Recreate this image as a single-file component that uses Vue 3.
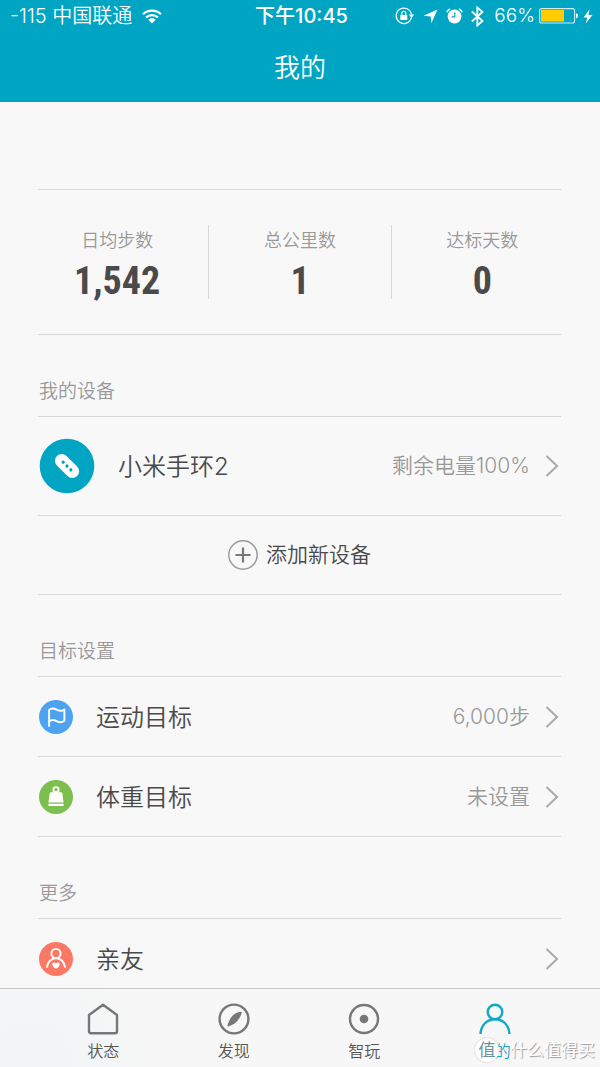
<script setup>
import { ref } from 'vue'

const stats = [
  { label: '日均步数', value: '1,542' },
  { label: '总公里数', value: '1' },
  { label: '达标天数', value: '0' },
]

const goals = [
  { icon: 'flag', name: '运动目标', value: '6,000步' },
  { icon: 'weight', name: '体重目标', value: '未设置' },
]

const tabs = [
  { id: 'status', label: '状态' },
  { id: 'discover', label: '发现' },
  { id: 'play', label: '智玩' },
  { id: 'mine', label: '我的' },
]
const active = ref('mine')
</script>

<template>
  <div class="app">
    <header class="header">
      <div class="status">
        <div class="carrier">
          <span>-115 中国联通</span>
          <svg class="wifi" width="20" height="15" viewBox="0 0 20 15" aria-hidden="true">
            <path d="M1 5.2a13 13 0 0 1 18 0M4 8.5a8.7 8.7 0 0 1 12 0" fill="none" stroke="#fff" stroke-width="2.2" />
            <path d="M6.3 10.8a5.4 5.4 0 0 1 7.4 0L10 14.6z" fill="#fff" />
          </svg>
        </div>
        <div class="time">下午10:45</div>
        <div class="indicators">
          <svg width="20" height="18" viewBox="0 0 20 18" aria-hidden="true">
            <path d="M16.4 10.7A7.7 7.7 0 1 1 16.5 7.5" fill="none" stroke="#fff" stroke-width="1.2" />
            <path d="M13.8 7.5h5.4l-2.7 3.6z" fill="#fff" />
            <rect x="5.3" y="8" width="7" height="5" rx=".6" fill="#fff" />
            <path d="M6.8 8V6.3a2 2 0 0 1 4 0V8" fill="none" stroke="#fff" stroke-width="1.2" />
          </svg>
          <svg width="15" height="15" viewBox="0 0 15 15" aria-hidden="true">
            <path d="M14.5.5 8.4 14.3 7.7 7.4.5 6.8z" fill="#fff" />
          </svg>
          <svg width="17" height="16" viewBox="0 0 17 16" aria-hidden="true">
            <circle cx="8.5" cy="8.5" r="6.9" fill="#fff" />
            <path d="M.9 4.3A5 5 0 0 1 4.1 1M16.1 4.3A5 5 0 0 0 12.9 1" fill="none" stroke="#fff" stroke-width="1.5" />
            <path d="M8.8 4.2v4.6H5.6" fill="none" stroke="#00a5c4" stroke-width="1.2" />
          </svg>
          <svg width="13" height="21" viewBox="0 0 13 21" aria-hidden="true">
            <path d="M.8 5.5 11.5 15l-5.2 4.5v-18L11.5 6 .8 15.5" fill="none" stroke="#fff" stroke-width="1.8" />
          </svg>
          <span class="percent">66%</span>
          <svg class="battery" width="40" height="16" viewBox="0 0 40 16" aria-hidden="true">
            <rect x=".6" y=".6" width="35" height="14.4" rx="2" fill="none" stroke="#fff" stroke-opacity=".8" stroke-width="1.1" />
            <rect x="2" y="2" width="23" height="11.6" fill="#fc0" />
            <path d="M37 5.2q2 .4 2 2.6t-2 2.6z" fill="#fff" />
          </svg>
          <svg class="bolt" width="10" height="15" viewBox="0 0 10 15" aria-hidden="true">
            <path d="M6.6.5.5 8.4h3.7L2.8 14.5 9.5 6H5.4z" fill="#fff" />
          </svg>
        </div>
      </div>
      <h1 class="title">我的</h1>
    </header>

    <main class="content">
      <dl class="stats">
        <div v-for="s in stats" :key="s.label" class="stat">
          <dt>{{ s.label }}</dt>
          <dd>{{ s.value }}</dd>
        </div>
      </dl>

      <section>
        <h2 class="heading">我的设备</h2>
        <div class="list">
          <button type="button" class="row device">
            <svg width="56" height="56" viewBox="0 0 56 56" aria-hidden="true">
              <circle cx="28" cy="28" r="27.3" fill="#00a5c4" />
              <g transform="rotate(45 28 28)">
                <rect x="13.7" y="21.2" width="28.6" height="13.6" rx="6.8" fill="#fff" />
                <g fill="#00a5c4">
                  <circle cx="22.6" cy="28" r="1.6" />
                  <circle cx="28" cy="28" r="1.6" />
                  <circle cx="33.4" cy="28" r="1.6" />
                </g>
              </g>
            </svg>
            <span class="name">小米手环2</span>
            <span class="value">剩余电量100%</span>
            <svg class="chevron" width="14" height="22" viewBox="0 0 14 22" aria-hidden="true"><path d="m1.5 1 10.5 10L1.5 21" /></svg>
          </button>
          <button type="button" class="add">
            <svg width="30" height="30" viewBox="0 0 30 30" aria-hidden="true">
              <circle cx="15" cy="15" r="14.2" fill="none" stroke="#999" stroke-width="1.4" />
              <path d="M7.5 15h15M15 7.5v15" stroke="#777" stroke-width="2.2" />
            </svg>
            <span>添加新设备</span>
          </button>
        </div>
      </section>

      <section>
        <h2 class="heading">目标设置</h2>
        <div class="list">
          <button v-for="g in goals" :key="g.name" type="button" class="row">
            <svg v-if="g.icon === 'flag'" width="34" height="34" viewBox="0 0 34 34" aria-hidden="true">
              <circle cx="17" cy="17" r="17" fill="#4ea3f1" />
              <path d="M10.1 26.8V10c2.4-2 5-1.7 7.5-.3s5.2 1.7 7.8-.3v11.4c-2.6 2-5.3 1.7-7.8.3s-5.1-1.7-7.5.3" fill="none" stroke="#fff" stroke-width="1.9" stroke-linejoin="round" />
            </svg>
            <svg v-else width="34" height="34" viewBox="0 0 34 34" aria-hidden="true">
              <circle cx="17" cy="17" r="17" fill="#7dbf4f" />
              <circle cx="17" cy="9.7" r="2.6" fill="none" stroke="#fff" stroke-width="1.9" />
              <path d="M12.4 12.3h9.2q1.6 0 1.8 1.4l1.2 8.7H9.4l1.2-8.7q.2-1.4 1.8-1.4zM9.4 23.8h15.2v2.3H9.4z" fill="#fff" />
            </svg>
            <span class="name">{{ g.name }}</span>
            <span class="value">{{ g.value }}</span>
            <svg class="chevron" width="14" height="22" viewBox="0 0 14 22" aria-hidden="true"><path d="m1.5 1 10.5 10L1.5 21" /></svg>
          </button>
        </div>
      </section>

      <section>
        <h2 class="heading">更多</h2>
        <div class="list">
          <button type="button" class="row">
            <svg width="34" height="34" viewBox="0 0 34 34" aria-hidden="true">
              <circle cx="17" cy="17" r="17" fill="#fb7864" />
              <circle cx="17" cy="11.5" r="4.6" fill="none" stroke="#fff" stroke-width="1.9" />
              <path d="M7.8 25.6c.6-5.2 4.2-9.3 9.2-9.3s8.6 4.1 9.2 9.3" fill="none" stroke="#fff" stroke-width="1.9" />
              <path d="M17 26.8c-2.3-1.5-3.7-2.9-3.7-4.4 0-2 2.6-2.5 3.7-.8 1.1-1.7 3.7-1.2 3.7.8 0 1.5-1.4 2.9-3.7 4.4z" fill="#fff" />
            </svg>
            <span class="name">亲友</span>
            <svg class="chevron" width="14" height="22" viewBox="0 0 14 22" aria-hidden="true"><path d="m1.5 1 10.5 10L1.5 21" /></svg>
          </button>
        </div>
      </section>
    </main>

    <nav class="tabs">
      <button
        v-for="t in tabs"
        :key="t.id"
        type="button"
        class="tab"
        :class="{ active: active === t.id }"
        @click="active = t.id"
      >
        <svg width="34" height="32" viewBox="0 0 34 32" fill="none" stroke="currentColor" stroke-width="2.4" aria-hidden="true">
          <path v-if="t.id === 'status'" d="M17 1.7 31 12v16.2q0 2-2 2H5q-2 0-2-2V12z" stroke-linejoin="round" />
          <template v-else-if="t.id === 'discover'">
            <circle cx="17" cy="16" r="14.4" />
            <path d="M24.2 8.8c-4.600.4-7.900 2.600-9.900 5.400-1.600 2.400-2.900 5-3.900 8.400q.1 1 1.100.8c3.800-1.400 6.700-2.800 8.800-5.400 2.200-2.600 3.800-5.200 4.500-8.400q.1-.8-.6-.8z" fill="currentColor" stroke="none" />
          </template>
          <template v-else-if="t.id === 'play'">
            <circle cx="17" cy="16" r="14" />
            <circle cx="17" cy="16" r="4.3" fill="currentColor" stroke="none" />
          </template>
          <template v-else>
            <circle cx="17" cy="9" r="7.3" />
            <path d="M2.5 31c.6-9 6.500-14.700 14.500-14.700S30.900 22 31.500 31" />
          </template>
        </svg>
        <span>{{ t.label }}</span>
      </button>
      <div class="watermark">
        <span class="seal">值</span>
        <span>什么值得买</span>
      </div>
    </nav>
  </div>
</template>

<style>
body {
  background: #f8f8f8;
}
</style>

<style scoped>
.app {
  display: flex;
  flex-direction: column;
  height: 100vh;
  background: #f8f8f8;
  color: #4a4a4a;
  font-family: Inter, "Noto Sans CJK SC", sans-serif;
  font-weight: 350;
}
button {
  border: 0;
  margin: 0;
  padding: 0;
  background: none;
  color: inherit;
  font: inherit;
  cursor: pointer;
}
svg {
  flex: none;
  display: block;
}
.header {
  flex: none;
  background: #00a5c4;
  color: #fff;
}
.status {
  display: grid;
  grid-template-columns: 1fr auto 1fr;
  align-items: center;
  height: 32px;
  padding: 0 7px 0 10px;
  font-size: 19px;
  line-height: 32px;
  white-space: nowrap;
}
.carrier {
  display: flex;
  align-items: center;
  gap: 10px;
  font-size: 20px;
}
.time {
  font-size: 20px;
  font-weight: 500;
}
.indicators {
  display: flex;
  align-items: center;
  justify-content: flex-end;
  gap: 8px;
}
.percent {
  margin-left: 2px;
}
.battery {
  margin-left: -4px;
}
.bolt {
  margin-left: -4px;
}
.title {
  margin: 0;
  padding-top: 2px;
  font-size: 26px;
  font-weight: 350;
  line-height: 68px;
  text-align: center;
}
.content {
  flex: 1;
  min-height: 0;
  padding: 87px 39px 0 38px;
  overflow-y: auto;
  scrollbar-width: none;
}
.stats {
  display: grid;
  grid-template-columns: repeat(3, 1fr);
  margin: 0 -12px;
  padding: 36px 0;
  background:
    linear-gradient(#d8d8d8, #d8d8d8) center top / calc(100% - 24px) 1px no-repeat,
    linear-gradient(#d8d8d8, #d8d8d8) center bottom / calc(100% - 24px) 1px no-repeat;
}
.stat {
  height: 74px;
  text-align: center;
}
.stat + .stat {
  border-left: 1px solid #d8d8d8;
}
.stat dt {
  padding-top: 2px;
  color: #999;
  font-size: 18px;
  line-height: 28px;
}
.stat dd {
  margin: 0;
  font-family: "Roboto Condensed", "Liberation Sans Narrow", "Liberation Sans", sans-serif;
  font-size: 38px;
  font-weight: 700;
  line-height: 52px;
}
.heading {
  margin: 0;
  padding: 43px 1px 10px;
  color: #999;
  font-size: 19px;
  font-weight: 350;
  line-height: 28px;
}
.list {
  border-top: 1px solid #d8d8d8;
}
.row,
.add {
  display: flex;
  align-items: center;
  box-sizing: border-box;
  width: 100%;
  min-height: 80px;
  border-bottom: 1px solid #d8d8d8;
  text-align: left;
}
.row {
  gap: 23px;
  padding: 0 2px 0 1px;
}
.device {
  min-height: 99px;
}
.name {
  flex: 1;
  padding-top: 2px;
  font-size: 24px;
  line-height: 36px;
}
.value {
  color: #999;
  font-size: 21px;
  line-height: 32px;
}
.chevron {
  margin-left: -8px;
  fill: none;
  stroke: #aaa;
  stroke-width: 2;
}
.add {
  justify-content: center;
  gap: 8px;
  min-height: 79px;
  font-size: 21px;
  line-height: 32px;
}
.tabs {
  position: relative;
  flex: none;
  display: flex;
  padding: 0 40px 0 38px;
  border-top: 1px solid #c8c8c8;
  background: radial-gradient(circle at 30px 70px, #f1f4f6, #f7f7f7 130px);
}
.tab {
  flex: 1;
  display: flex;
  flex-direction: column;
  align-items: center;
  gap: 4px;
  padding: 14px 0 4px;
  color: #777;
  font-size: 16px;
  line-height: 24px;
}
.tab span {
  color: #555;
}
.tab.active,
.tab.active span {
  color: #10a8c6;
}
.watermark {
  position: absolute;
  right: 5px;
  bottom: 4px;
  display: flex;
  align-items: center;
  gap: 11px;
  color: #fff;
  font-size: 17px;
  font-weight: 400;
  line-height: 26px;
  text-shadow: 1px 1px 1px #999;
  pointer-events: none;
}
.seal {
  width: 24px;
  height: 24px;
  border-radius: 50%;
  background: #fff;
  box-shadow: 0 0 2px #bbb;
  color: #6b9299;
  line-height: 24px;
  text-align: center;
  text-shadow: none;
}
</style>
